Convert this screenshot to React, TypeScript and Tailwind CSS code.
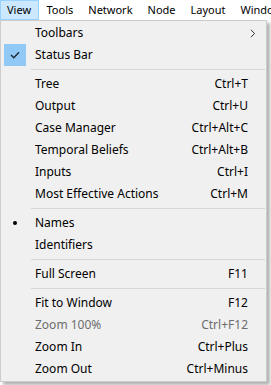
import React from 'react';

type Item =
  | { kind: 'sep' }
  | {
      kind: 'item';
      label: string;
      shortcut?: string;
      mark?: 'check' | 'dot';
      submenu?: boolean;
      disabled?: boolean;
    };

const items: Item[] = [
  { kind: 'item', label: 'Toolbars', submenu: true },
  { kind: 'item', label: 'Status Bar', mark: 'check' },
  { kind: 'sep' },
  { kind: 'item', label: 'Tree', shortcut: 'Ctrl+T' },
  { kind: 'item', label: 'Output', shortcut: 'Ctrl+U' },
  { kind: 'item', label: 'Case Manager', shortcut: 'Ctrl+Alt+C' },
  { kind: 'item', label: 'Temporal Beliefs', shortcut: 'Ctrl+Alt+B' },
  { kind: 'item', label: 'Inputs', shortcut: 'Ctrl+I' },
  { kind: 'item', label: 'Most Effective Actions', shortcut: 'Ctrl+M' },
  { kind: 'sep' },
  { kind: 'item', label: 'Names', mark: 'dot' },
  { kind: 'item', label: 'Identifiers' },
  { kind: 'sep' },
  { kind: 'item', label: 'Full Screen', shortcut: 'F11' },
  { kind: 'sep' },
  { kind: 'item', label: 'Fit to Window', shortcut: 'F12' },
  { kind: 'item', label: 'Zoom 100%', shortcut: 'Ctrl+F12', disabled: true },
  { kind: 'item', label: 'Zoom In', shortcut: 'Ctrl+Plus' },
  { kind: 'item', label: 'Zoom Out', shortcut: 'Ctrl+Minus' },
];

const menus = ['View', 'Tools', 'Network', 'Node', 'Layout', 'Window'];

function Mark({ mark }: { mark?: 'check' | 'dot' }) {
  if (mark === 'check') {
    return (
      <div className="w-[22px] h-[22px] ml-[3px] bg-[#90c8f6] flex items-center justify-center">
        <svg width="10" height="8" viewBox="0 0 10 8">
          <path d="M1 4 L3.8 6.8 L9 1.2" fill="none" stroke="#1f2a35" strokeWidth="1.4" />
        </svg>
      </div>
    );
  }
  if (mark === 'dot') {
    return (
      <div className="w-[22px] h-[22px] ml-[3px] flex items-center justify-center">
        <div className="w-[4px] h-[4px] rounded-full bg-black" />
      </div>
    );
  }
  return <div className="w-[22px] h-[22px] ml-[3px]" />;
}

export default function App() {
  return (
    <div
      className="w-[271px] h-[385px] bg-white overflow-hidden text-[12px] text-black"
      style={{ fontFamily: '"Noto Sans", "Open Sans", sans-serif' }}
    >
      <div className="h-[20px] flex items-stretch bg-white whitespace-nowrap text-[11px] overflow-hidden">
        {menus.map((m, i) => (
          <div
            key={m}
            className={
              i === 0
                ? 'shrink-0 w-[39px] pl-[6px] flex items-center bg-[#cce8ff] border border-[#99d1ff]'
                : 'shrink-0 px-[6.5px] flex items-center border border-transparent'
            }
          >
            {m}
          </div>
        ))}
      </div>

      <div className="w-[267px] bg-[#f0f0f0] border border-[#cccccc] py-[1px] shadow-[3px_3px_3px_rgba(0,0,0,0.3)]">
        {items.map((it, i) =>
          it.kind === 'sep' ? (
            <div key={i} className="h-[7px] flex items-center pl-[30px] pr-[1px]">
              <div className="h-px w-full bg-[#d7d7d7]" />
            </div>
          ) : (
            <div
              key={i}
              className={`h-[22px] flex items-center ${it.disabled ? 'text-[#6d6d6d]' : 'text-black'}`}
            >
              <Mark mark={it.mark} />
              <span className="ml-[9px] flex-1 whitespace-nowrap">{it.label}</span>
              {it.shortcut && <span className="whitespace-nowrap">{it.shortcut}</span>}
              {it.submenu && (
                <svg width="6" height="9" viewBox="0 0 6 9" className="mr-[10px]">
                  <path d="M1 0.8 L4.5 4.5 L1 8.2" fill="none" stroke="#333" strokeWidth="1" />
                </svg>
              )}
              <div className={it.submenu ? 'w-0' : 'w-[18px]'} />
            </div>
          )
        )}
      </div>
    </div>
  );
}
